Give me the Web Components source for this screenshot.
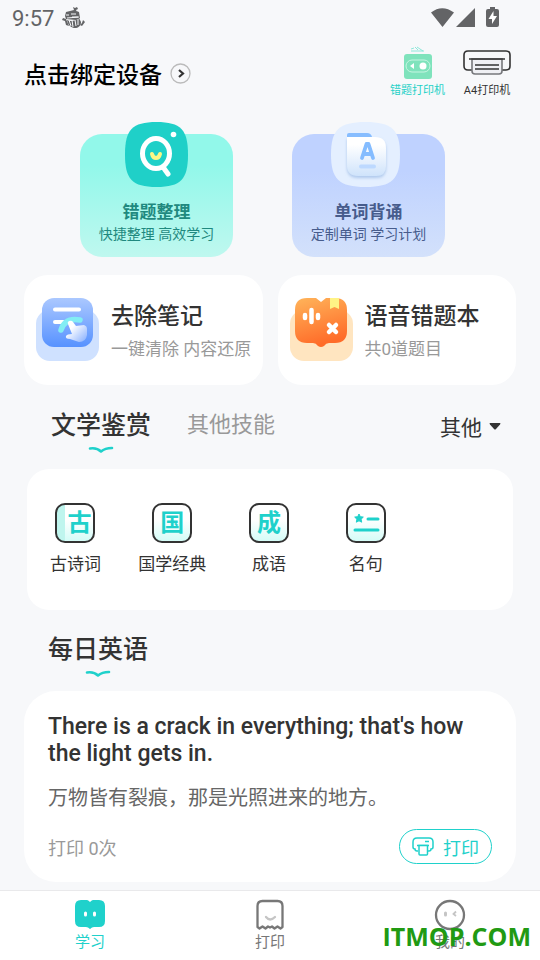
<!DOCTYPE html>
<html lang="zh-CN">
<head>
<meta charset="utf-8" />
<meta name="viewport" content="width=device-width, initial-scale=1" />
<title>学习</title>
<style>
body {
	background: #f7f8fa;
	color: #333;
	font-family: Roboto, "Noto Sans CJK SC", sans-serif;
	margin: 0;
}
</style>
</head>

<body>
<study-page></study-page>

<template id="status-bar">
<style>
:host {
	align-items: center;
	color: #636466;
	display: flex;
	font-size: 22px;
	height: 36px;
	justify-content: space-between;
	padding: 0 36px 0 12px;
}

div {
	align-items: center;
	display: flex;
	gap: 8px;
}

svg {
	display: block;
	fill: currentColor;
}
</style>
<div>
	<span>9:57</span>
	<svg width="24" height="24" viewBox="0 0 24 24">
		<path d="M4 6l8-2 5 2 1 6-4 2-10-1-1-3zM12 4l-1-3 2 1 2-1 1 2-2 1 1 2zM1 12l3 1 3 7-3-1-1-4-3-1zM21 14l2 2-3 4-2-1 2-2z" />
		<path d="M5 14c4 2 8 1 12-2l2 4c0 4-3 6-6 6s-7-2-8-8z" />
		<path d="M4 9h3m2-1h5m-4 3h6M7 14l2 6m1-6l1 7m2-7l1 6m2-7v6M5 12l12-1" fill="none" stroke="#f7f8fa" />
	</svg>
</div>
<div>
	<svg width="73" height="22" viewBox="0 0 73 22">
		<path d="M0 5.500Q11-3 23 5.500L11.500 20zM44 1v19H25zM55 4q0-2 2-2h2V0h5v2h2q2 0 2 2v14q0 2-2 2h-9q-2 0-2-2z" />
		<path d="M62.500 4l-5 8h3.500v5l5-8h-3.500z" fill="#fff" />
	</svg>
</div>
</template>

<template id="device-header">
<style>
:host {
	align-items: center;
	display: flex;
	height: 74px;
	justify-content: space-between;
	padding: 0 29px 0 24px;
}

button {
	background: none;
	border: 0;
	color: inherit;
	cursor: pointer;
	font: inherit;
	padding: 0;
}

svg {
	display: block;
}

.bind {
	align-items: center;
	color: #000;
	display: flex;
	font-size: 23px;
	font-weight: 500;
	gap: 8px;
}

.printers {
	display: flex;
	gap: 18px;
}

.printers button {
	align-items: center;
	display: flex;
	flex-direction: column;
	font-size: 11px;
	line-height: 18px;
}

.printers .active {
	color: #1fd1c7;
}
</style>
<button class="bind">
	点击绑定设备
	<svg width="21" height="21" viewBox="0 0 21 21" fill="none">
		<circle cx="10.500" cy="10.500" r="9.500" stroke="#bbb" stroke-width="1.300" />
		<path d="M9 7l4 3.500L9 14" stroke="#333" stroke-width="2.200" />
	</svg>
</button>
<div class="printers">
	<button class="active">
		<svg width="30" height="36" viewBox="0 0 30 36">
			<path d="M8 3l3-1m1-1l3 3m-7 1h13m-7-4l6 4" stroke="#8ee8da" fill="none" />
			<rect x="1" y="8" width="28" height="25" rx="3" fill="#7fe3bc" />
			<rect x="3" y="14" width="24" height="12" rx="6" fill="none" stroke="#c7f5e2" />
			<path d="M7 20l4-3v6z" fill="#fff" />
			<circle cx="20" cy="20" r="3.500" fill="#fff" />
		</svg>
		错题打印机
	</button>
	<button>
		<svg width="48" height="36" viewBox="0 0 48 36" fill="none" stroke="#333" stroke-width="1.600">
			<path d="M9 24H5q-4 0-4-4V9q0-4 4-4h38q4 0 4 4v11q0 4-4 4h-4" />
			<path d="M9 13v12q0 3 3 3h24q3 0 3-3V13z" fill="#eff0f4" stroke="#77787c" />
			<path d="M6 13h36M12 19h24M12 23h24" />
		</svg>
		A4打印机
	</button>
</div>
</template>

<template id="hero-card">
<style>
:host {
	background: linear-gradient(#92f8ea 25%, #bff8ef);
	border-radius: 22px;
	box-sizing: border-box;
	color: #1f897f;
	flex: 1;
	height: 123px;
	text-align: center;
}

:host([tone="blue"]) {
	background: linear-gradient(#bfd2ff 30%, #d3e1fb);
	color: #475c8c;
}

button {
	align-items: center;
	background: none;
	border: 0;
	color: inherit;
	cursor: pointer;
	display: flex;
	flex-direction: column;
	font: inherit;
	margin-top: -12px;
	padding: 0;
	width: 100%;
}

.title {
	font-size: 17px;
	font-weight: 700;
	line-height: 24px;
	margin-top: 13px;
}

.note {
	font-size: 14px;
	line-height: 20px;
	white-space: nowrap;
}
</style>
<button>
	<slot name="icon"></slot>
	<span class="title"><slot name="title"></slot></span>
	<span class="note"><slot></slot></span>
</button>
</template>

<template id="feature-card">
<style>
:host {
	background: #fff;
	border-radius: 24px;
	flex: 1;
}

button {
	align-items: flex-start;
	background: none;
	border: 0;
	box-sizing: border-box;
	color: inherit;
	cursor: pointer;
	display: flex;
	font: inherit;
	gap: 12px;
	height: 110px;
	padding: 23px 0 0 12px;
	text-align: left;
	width: 100%;
}

.text {
	display: flex;
	flex-direction: column;
	padding-top: 2px;
	white-space: nowrap;
}

.title {
	font-size: 23px;
	font-weight: 500;
	line-height: 34px;
}

.note {
	color: #999;
	font-size: 17px;
	line-height: 30px;
}
</style>
<button>
	<slot name="icon"></slot>
	<span class="text">
		<span class="title"><slot name="title"></slot></span>
		<span class="note"><slot></slot></span>
	</span>
</button>
</template>

<template id="wave-mark">
<style>
:host {
	display: block;
	height: 8px;
	width: 26px;
}

svg {
	display: block;
}
</style>
<svg width="26" height="8" viewBox="0 0 26 8" fill="none" stroke="#1fd1cb" stroke-width="2.600" stroke-linecap="round" stroke-linejoin="round">
	<path d="M2 2.500q7-1 11 3 4-3.500 11-3.500" />
</svg>
</template>

<template id="skill-tabs">
<style>
:host {
	align-items: flex-start;
	display: flex;
	padding: 22px 38px 0 51px;
}

button {
	align-items: center;
	background: none;
	border: 0;
	color: #999;
	cursor: pointer;
	display: flex;
	flex-direction: column;
	font: inherit;
	font-size: 22px;
	line-height: 36px;
	padding: 0;
}

button[aria-selected="true"] {
	color: #333;
	font-size: 25px;
	font-weight: 500;
	line-height: 38px;
}

.tabs {
	align-items: flex-start;
	display: flex;
	flex: 1;
	gap: 36px;
}

wave-mark {
	margin-top: 1px;
}

label {
	align-items: center;
	display: flex;
	gap: 6px;
	padding-top: 3px;
}

select {
	appearance: none;
	background: none;
	border: 0;
	color: #333;
	font: inherit;
	font-size: 21px;
	line-height: 36px;
	padding: 0;
}
</style>
<div class="tabs" role="tablist">
	<button role="tab" aria-selected="true">文学鉴赏<wave-mark></wave-mark></button>
	<button role="tab" aria-selected="false">其他技能</button>
</div>
<label>
	<select aria-label="分类"><option>其他</option></select>
	<svg width="14" height="14" viewBox="0 0 14 14"><path d="M2 2h10q1 0 0 1.500L8 8q-1 1-2 0L2 3.500Q1 2 2 2z" fill="#333" /></svg>
</label>
</template>

<template id="topic-item">
<style>
:host {
	display: block;
}

button {
	align-items: center;
	background: none;
	border: 0;
	color: inherit;
	cursor: pointer;
	display: flex;
	flex-direction: column;
	font: inherit;
	font-size: 17px;
	gap: 8px;
	line-height: 26px;
	padding: 0;
	white-space: nowrap;
	width: 100%;
}

.tile {
	align-items: center;
	background: linear-gradient(#fff 40%, #d4fcf7);
	border: 2px solid #333;
	border-radius: 10px;
	box-sizing: border-box;
	color: #1fd1cb;
	display: flex;
	font-size: 24px;
	font-weight: 700;
	height: 40px;
	justify-content: center;
	line-height: 36px;
	width: 40px;
}

:host([spine]) .tile {
	background: linear-gradient(90deg, #bff5ee 8px, transparent 8px), linear-gradient(#fff 40%, #d4fcf7);
	padding-left: 8px;
}
</style>
<button>
	<span class="tile"><slot name="tile"></slot></span>
	<slot></slot>
</button>
</template>

<template id="daily-english">
<style>
:host {
	display: block;
	padding: 21px 24px 0;
}

.head {
	align-items: center;
	display: inline-flex;
	flex-direction: column;
	padding-left: 24px;
}

h2 {
	font-size: 25px;
	font-weight: 500;
	line-height: 38px;
	margin: 0;
}

wave-mark {
	margin-top: 1px;
}

article {
	background: #fff;
	border-radius: 32px;
	margin-top: 13px;
	padding: 22px 24px 18px;
}

.quote {
	font-size: 23px;
	font-weight: 500;
	line-height: 27px;
	margin: 0;
}

.meaning {
	color: #666;
	font-size: 20px;
	line-height: 30px;
	margin: 16px 0;
}

footer {
	align-items: center;
	color: #999;
	display: flex;
	font-size: 18px;
	justify-content: space-between;
}

button {
	align-items: center;
	background: #fff;
	border: 1px solid #1fd1cb;
	border-radius: 18px;
	color: #1fd1cb;
	cursor: pointer;
	display: flex;
	font: inherit;
	gap: 8px;
	height: 35px;
	padding: 0 12px;
}
</style>
<div class="head">
	<h2>每日英语</h2>
	<wave-mark></wave-mark>
</div>
<article>
	<p class="quote">There is a crack in everything; that's how the light gets in.</p>
	<p class="meaning">万物皆有裂痕，那是光照进来的地方。</p>
	<footer>
		<span>打印 0次</span>
		<button>
			<svg width="23" height="20" viewBox="0 0 23 20" fill="none" stroke="currentColor" stroke-width="1.500">
				<path d="M6 14H5q-2 0-2-2-2 0-2-2V5q0-4 4-4h12q4 0 4 4v5q0 2-2 2 0 2-2 2h-1M13 4.500h4M5 8.500h12" />
				<path d="M7 8.500h8.500V17q0 1-1 1H8q-1 0-1-1z" fill="#fff" />
			</svg>
			打印
		</button>
	</footer>
</article>
</template>

<template id="nav-item">
<style>
:host {
	color: #777;
	flex: 1;
}

:host([active]) {
	color: #1fd1cb;
}

a {
	align-items: center;
	color: inherit;
	display: flex;
	flex-direction: column;
	font-size: 15px;
	line-height: 22px;
	padding-top: 8px;
	text-decoration: none;
}
</style>
<a href="#">
	<slot name="icon"></slot>
	<slot></slot>
</a>
</template>

<template id="study-page">
<style>
:host {
	display: flex;
	flex-direction: column;
	min-height: 100vh;
	position: relative;
}

svg {
	display: block;
	flex: none;
}

main {
	flex: 1;
	padding-bottom: 8px;
}

.heroes {
	display: flex;
	gap: 59px;
	padding: 24px 95px 0 80px;
}

.features {
	display: flex;
	gap: 15px;
	padding: 18px 24px 0;
}

.topics {
	background: #fff;
	border-radius: 22px;
	display: grid;
	grid-template-columns: repeat(5, 1fr);
	margin: 15px 27px 0;
	padding: 34px 2px 33px 0;
}

nav {
	background: #fff;
	border-top: 1px solid #e9e9eb;
	display: flex;
	height: 69px;
}

.site-mark {
	bottom: 7px;
	color: #219a13;
	font: 700 25px/34px "Open Sans", sans-serif;
	position: absolute;
	right: 9px;
}
</style>
<status-bar></status-bar>
<device-header></device-header>
<main>
	<section class="heroes">
		<hero-card>
			<svg slot="icon" width="63" height="65" viewBox="0 0 63 65">
				<path d="M31.500 0C56 0 63 8 63 32.500S56 65 31.500 65 0 57 0 32.500 7 0 31.500 0z" fill="#1fd0c8" />
				<ellipse cx="31" cy="31.500" rx="13.500" ry="15" fill="none" stroke="#fff" stroke-width="5" />
				<path d="M38 45l5 7" stroke="#fff" stroke-width="5" stroke-linecap="round" />
				<circle cx="48.500" cy="12.500" r="2.800" fill="#fff" />
				<path d="M27 32q1 4 4 4t4-4" fill="none" stroke="#fcf785" stroke-width="4" stroke-linecap="round" />
			</svg>
			<span slot="title">错题整理</span>
			快捷整理 高效学习
		</hero-card>
		<hero-card tone="blue">
			<svg slot="icon" width="75" height="65" viewBox="0 0 75 65">
				<defs>
					<linearGradient id="sheet" x2="0" y2="1"><stop offset=".2" stop-color="#fff" /><stop offset="1" stop-color="#cfe3fb" /></linearGradient>
					<filter id="lift" x="-20%" y="-20%" width="140%" height="150%"><feDropShadow dx="0" dy="2" stdDeviation="1.500" flood-color="#8aaee0" flood-opacity=".6" /></filter>
				</defs>
				<path d="M34.500 0C61 0 69 8 69 32.500S61 65 34.500 65 0 57 0 32.500 8 0 34.500 0z" fill="#e4efff" />
				<path d="M16 13q0-2 2-2h18q4 0 5 4l1 5H16z" fill="#87bdff" />
				<path d="M16 15h28q11 0 11 11v18q0 10-10 10H27q-11 0-11-11z" fill="url(#sheet)" filter="url(#lift)" />
				<path d="M31 36l4.500-14h2L42 36M33 32h7" fill="none" stroke="#84bcff" stroke-width="3.800" stroke-linecap="round" stroke-linejoin="round" />
				<path d="M30 44.500h13" stroke="#bdd9ff" stroke-width="4" stroke-linecap="round" />
			</svg>
			<span slot="title">单词背诵</span>
			定制单词 学习计划
		</hero-card>
	</section>
	<section class="features">
		<feature-card>
			<svg slot="icon" width="63" height="63" viewBox="0 0 63 63">
				<defs>
					<linearGradient id="note" x2="0" y2="1"><stop stop-color="#abc8ff" /><stop offset="1" stop-color="#5792ff" /></linearGradient>
					<linearGradient id="hand" x2="1" y2="1"><stop offset=".3" stop-color="#fff" /><stop offset="1" stop-color="#84adff" /></linearGradient>
				</defs>
				<rect y="12" width="63" height="51" rx="14" fill="#cfe1ff" />
				<rect x="6" width="51" height="49" rx="12" fill="url(#note)" />
				<path d="M19 11.500h24M19 24h8" stroke="#fff" stroke-width="4" stroke-linecap="round" />
				<path d="M25 32q4-13 19-10" fill="none" stroke="#82edf4" stroke-width="5.500" stroke-linecap="round" />
				<path d="M33 23q3-1 4 1l3 4 8-1q3 1 3 4v6q-1 7-8 7l-9-3q-5 0-4-3 1-2 6-2l-4-10q-1-2 1-3z" fill="url(#hand)" />
			</svg>
			<span slot="title">去除笔记</span>
			一键清除 内容还原
		</feature-card>
		<feature-card>
			<svg slot="icon" width="63" height="63" viewBox="0 0 63 63">
				<defs>
					<linearGradient id="book" x2="0.300" y2="1"><stop stop-color="#ffb45a" /><stop offset="1" stop-color="#ff6c29" /></linearGradient>
				</defs>
				<rect y="12" width="63" height="51" rx="14" fill="#ffe5c0" />
				<path d="M17 0h9l5 4 5-4h9q12 0 12 12v21q0 12-12 12h-6q-3 0-5 3-3 2-6 0-2-3-5-3h-6Q5 45 5 33V12Q5 0 17 0z" fill="url(#book)" />
				<path d="M40 0h9v11l-4.500-2-4.500 2z" fill="#fff386" />
				<path d="M15 17v3M21.500 12v12M28 17v3" stroke="#fff" stroke-width="4.500" stroke-linecap="round" />
				<path d="M39 27l7 7m0-7l-7 7" stroke="#fff" stroke-width="4.500" stroke-linecap="round" />
			</svg>
			<span slot="title">语音错题本</span>
			共0道题目
		</feature-card>
	</section>
	<skill-tabs></skill-tabs>
	<section class="topics">
		<topic-item spine><span slot="tile">古</span>古诗词</topic-item>
		<topic-item><span slot="tile">国</span>国学经典</topic-item>
		<topic-item><span slot="tile">成</span>成语</topic-item>
		<topic-item>
			<svg slot="tile" width="28" height="20" viewBox="0 0 28 20">
				<path d="M7 1l1.300 2.700 3 .4-2.200 2.100.6 3L7 7.800 4.300 9.200l.6-3-2.200-2.100 3-.4z" fill="#1fd1cb" stroke="#1fd1cb" stroke-linejoin="round" />
				<path d="M16 6h10M3 17h23" stroke="#1fd1cb" stroke-width="3" stroke-linecap="round" />
			</svg>名句</topic-item>
	</section>
	<daily-english></daily-english>
</main>
<nav>
	<nav-item active>
		<svg slot="icon" width="32" height="32" viewBox="0 0 32 32">
			<path d="M7 1h6q1 0 3 2 2-2 3-2h6q6 0 6 6v15q0 6-6 6h-5q-2 0-4 2-2-2-4-2H7q-6 0-6-6V7q0-6 6-6z" fill="#1fd1cb" />
			<path d="M11.500 14v2M20.500 14v2" stroke="#fff" stroke-width="3" stroke-linecap="round" />
		</svg>
		学习
	</nav-item>
	<nav-item>
		<svg slot="icon" width="32" height="32" viewBox="0 0 32 32" fill="none" stroke-width="2.300" stroke-linecap="round" stroke-linejoin="round">
			<path d="M3.500 28V7q0-5 5-5h15q5 0 5 5v21l-2 1.500-3-2-3 2-2.500-2-2 1-2-1-2.500 2-3-2-3 2z" stroke="#777" />
			<path d="M12 18q4 5 9 0" stroke="#c5c5c5" />
		</svg>
		打印
	</nav-item>
	<nav-item>
		<svg slot="icon" width="32" height="32" viewBox="0 0 32 32" fill="none">
			<circle cx="16" cy="16" r="14" stroke="#777" stroke-width="2.300" />
			<path d="M11.500 14v2" stroke="#c5c5c5" stroke-width="3" stroke-linecap="round" />
			<path d="M22 12.500L19.500 15l2.500 2" stroke="#c5c5c5" stroke-width="1.800" />
		</svg>
		我的
	</nav-item>
</nav>
<div class="site-mark">ITMOP.COM</div>
</template>

<script>
class TemplateElement extends HTMLElement {
	constructor() {
		super();

		this.attachShadow({ mode: 'open' }).appendChild(document.querySelector('template#' + this.localName).content.cloneNode(true));
	}
}

[
	'wave-mark',
	'status-bar',
	'device-header',
	'hero-card',
	'feature-card',
	'skill-tabs',
	'topic-item',
	'daily-english',
	'nav-item',
	'study-page'
].forEach(name => {
	window.customElements.define(name, class extends TemplateElement {});
});
</script>
</body>
</html>
